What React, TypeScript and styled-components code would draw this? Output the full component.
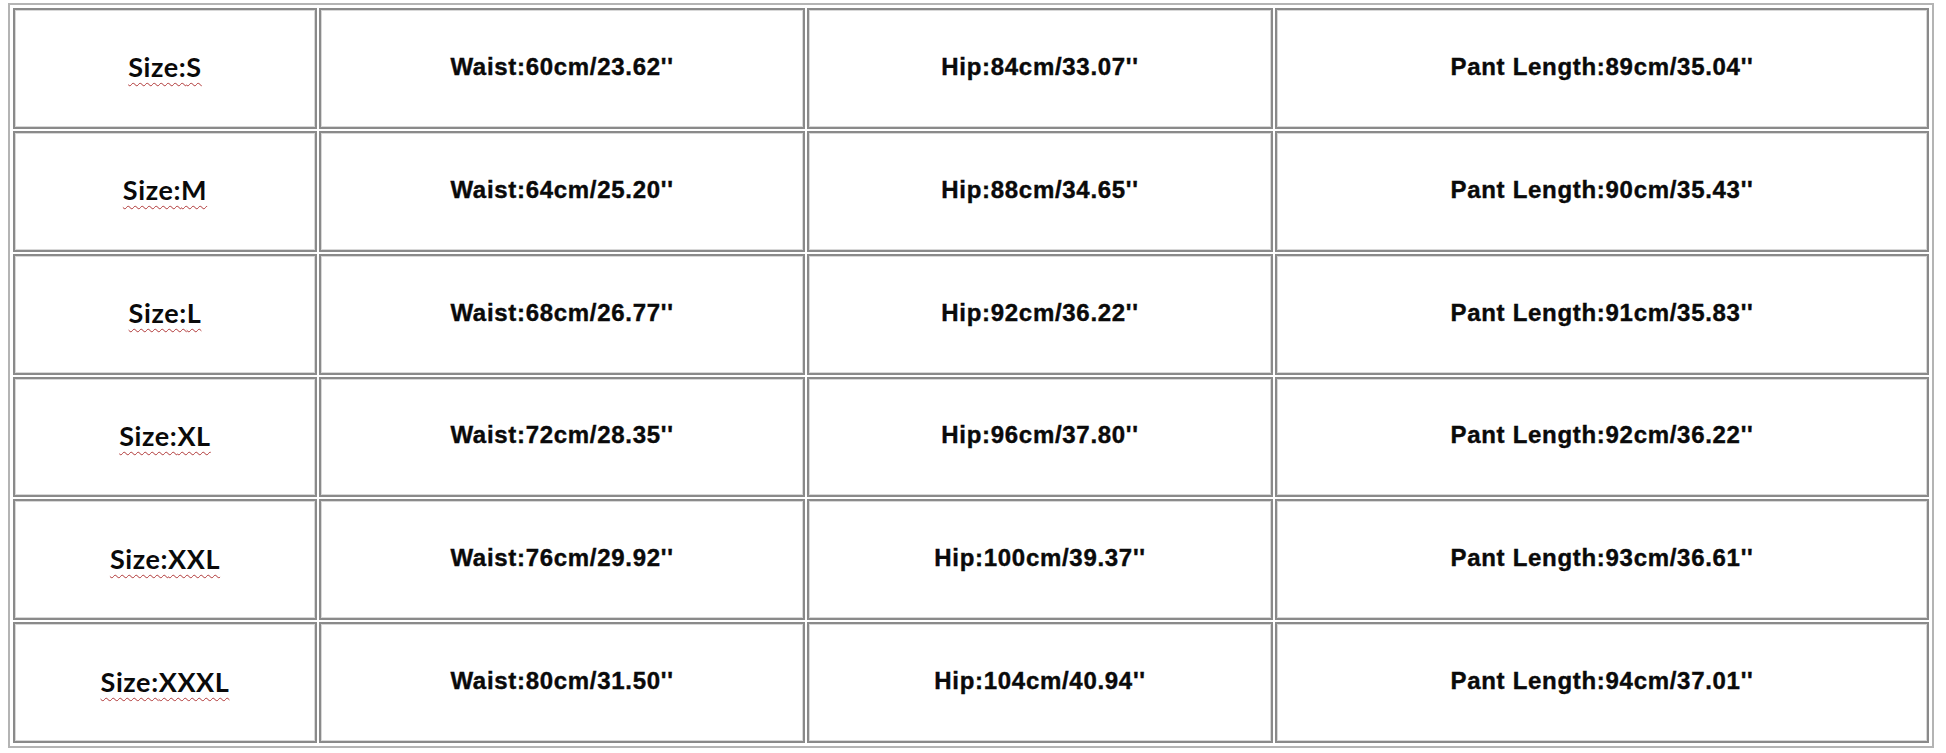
import React from "react";
import styled, { createGlobalStyle } from "styled-components";

const Global = createGlobalStyle`
  html, body { margin: 0; padding: 0; background: #ffffff; }
  body { font-family: "Liberation Sans", Arial, sans-serif; }
`;

const Page = styled.div`
  padding: 3px 0 0 8px;
`;

const Table = styled.div`
  box-sizing: border-box;
  width: 1926px;
  height: 745px;
  border: 2px solid #b4b4b4;
  padding: 3px;
  display: grid;
  grid-template-columns: 304px 486px 466px 1fr;
  grid-template-rows: repeat(6, 1fr);
  gap: 2px;
`;

const Cell = styled.div`
  box-sizing: border-box;
  border: 2px solid #8a8a8a;
  box-shadow: inset 0 0 0 1px #d8d8d8;
  display: flex;
  align-items: center;
  justify-content: center;
  padding-bottom: 3px;
  background: #ffffff;
`;

const Value = styled.span`
  font-family: "Liberation Sans", Arial, sans-serif;
  font-weight: 700;
  font-size: 24px;
  letter-spacing: 0.7px;
  color: #0a0a0a;
  -webkit-text-stroke: 0.4px #0a0a0a;
  white-space: nowrap;
`;

const SizeLabel = styled.span`
  font-family: Lato, "Open Sans", sans-serif;
  font-weight: 700;
  font-size: 27px;
  letter-spacing: 0.6px;
  color: #0a0a0a;
  white-space: nowrap;
  text-decoration-line: underline;
  text-decoration-style: wavy;
  text-decoration-color: #b03838;
  text-decoration-thickness: 1px;
  text-underline-offset: 5px;
`;

type Row = { size: string; waist: string; hip: string; length: string };

const rows: Row[] = [
  { size: "S", waist: "60cm/23.62''", hip: "84cm/33.07''", length: "89cm/35.04''" },
  { size: "M", waist: "64cm/25.20''", hip: "88cm/34.65''", length: "90cm/35.43''" },
  { size: "L", waist: "68cm/26.77''", hip: "92cm/36.22''", length: "91cm/35.83''" },
  { size: "XL", waist: "72cm/28.35''", hip: "96cm/37.80''", length: "92cm/36.22''" },
  { size: "XXL", waist: "76cm/29.92''", hip: "100cm/39.37''", length: "93cm/36.61''" },
  { size: "XXXL", waist: "80cm/31.50''", hip: "104cm/40.94''", length: "94cm/37.01''" },
];

export default function App() {
  return (
    <>
      <Global />
      <Page>
        <Table>
          {rows.map((r) => (
            <React.Fragment key={r.size}>
              <Cell>
                <SizeLabel>Size:{r.size}</SizeLabel>
              </Cell>
              <Cell>
                <Value>Waist:{r.waist}</Value>
              </Cell>
              <Cell>
                <Value>Hip:{r.hip}</Value>
              </Cell>
              <Cell>
                <Value>Pant Length:{r.length}</Value>
              </Cell>
            </React.Fragment>
          ))}
        </Table>
      </Page>
    </>
  );
}
